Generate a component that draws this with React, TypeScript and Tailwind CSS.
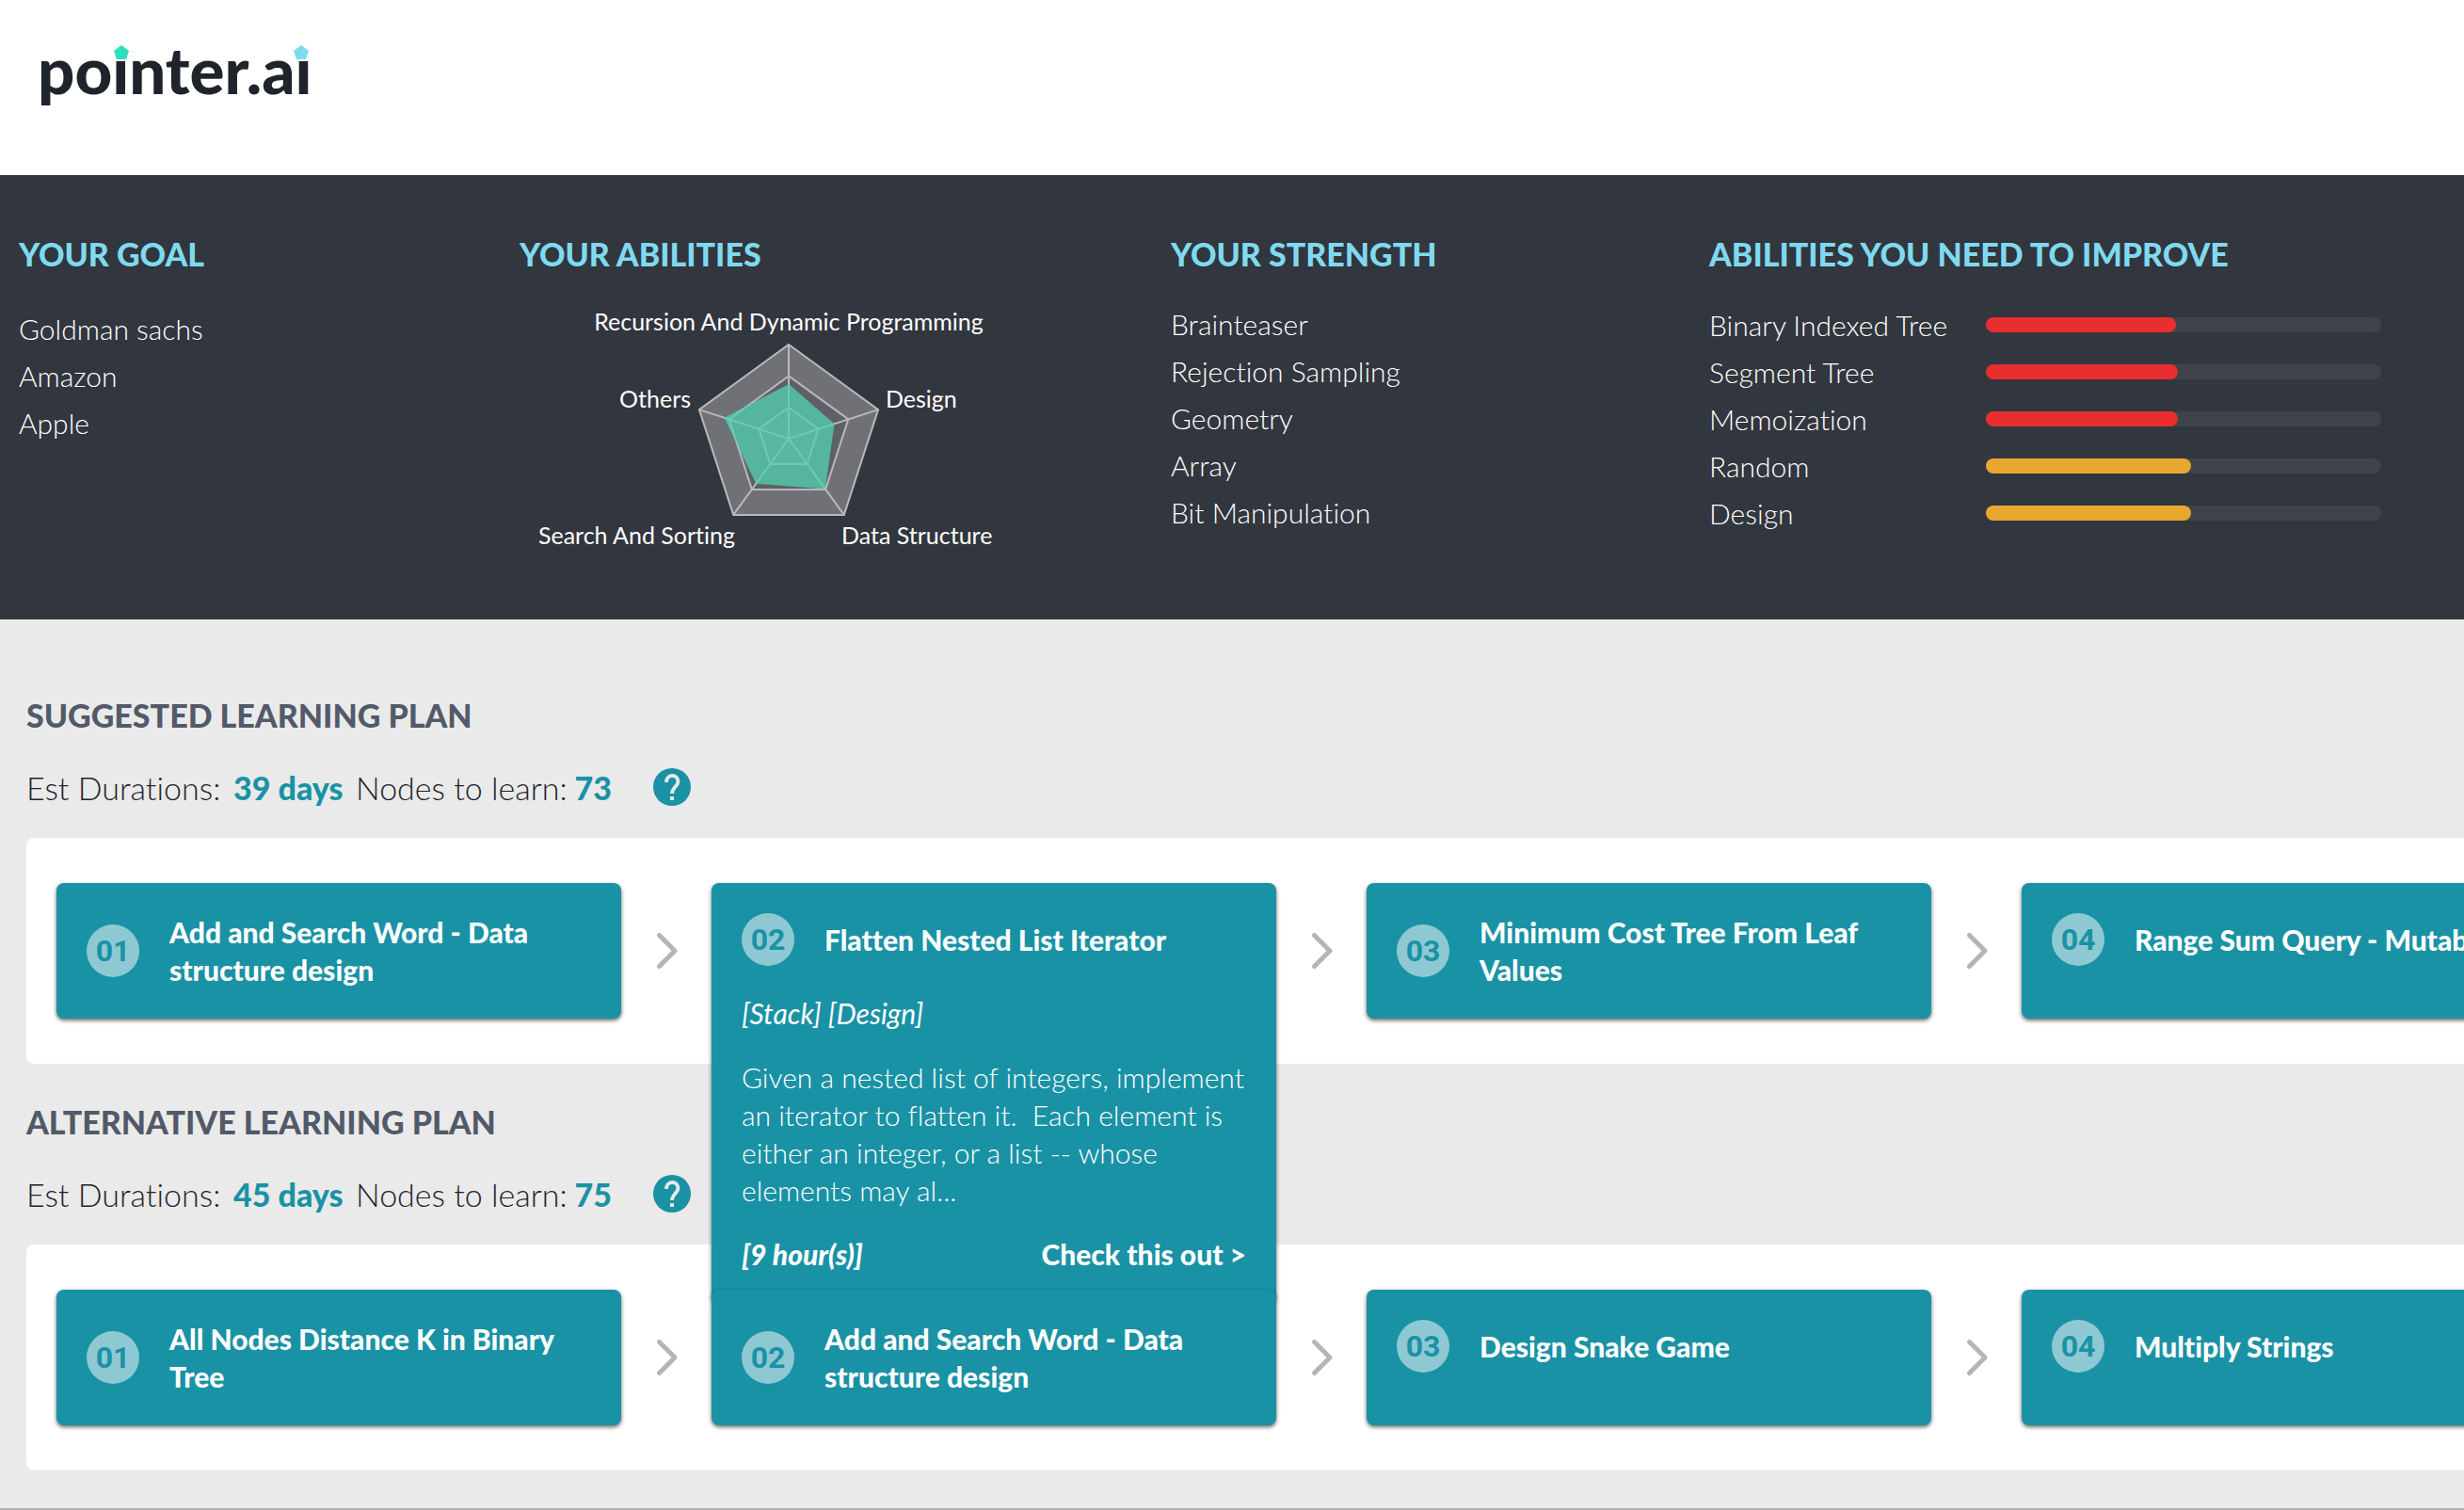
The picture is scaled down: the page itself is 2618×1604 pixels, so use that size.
import React from "react";

const goals = ["Goldman sachs", "Amazon", "Apple"];
const strengths = ["Brainteaser", "Rejection Sampling", "Geometry", "Array", "Bit Manipulation"];
const weak = [
  { name: "Binary Indexed Tree", value: 48, color: "bg-[#e92e2f]" },
  { name: "Segment Tree", value: 48.5, color: "bg-[#e92e2f]" },
  { name: "Memoization", value: 48.5, color: "bg-[#e92e2f]" },
  { name: "Random", value: 52, color: "bg-[#e8a830]" },
  { name: "Design", value: 52, color: "bg-[#e8a830]" },
];

type Node = {
  title: string;
  details?: { tags: string; text: string; hours: string };
};

const suggested: Node[] = [
  { title: "Add and Search Word - Data structure design" },
  {
    title: "Flatten Nested List Iterator",
    details: {
      tags: "[Stack] [Design]",
      text: "Given a nested list of integers, implement\nan iterator to flatten it.  Each element is\neither an integer, or a list -- whose\nelements may al...",
      hours: "[9 hour(s)]",
    },
  },
  { title: "Minimum Cost Tree From Leaf Values" },
  { title: "Range Sum Query - Mutable" },
];

const alternative: Node[] = [
  { title: "All Nodes Distance K in Binary Tree" },
  { title: "Add and Search Word - Data structure design" },
  { title: "Design Snake Game" },
  { title: "Multiply Strings" },
];

function Logo() {
  return (
    <svg width="320" height="120" viewBox="40 20 320 120" role="img" aria-label="pointer.ai">
      <text x="40" y="100" fontSize="69" className="fill-[#1f242c] font-['Lato',sans-serif] font-black">
        pointer.ai
      </text>
      <rect x="116" y="40" width="26" height="22" fill="#fff" />
      <rect x="304" y="40" width="34" height="22" fill="#fff" />
      <path d="M129 48l8 6-3 9h-10l-3-9z" fill="#2edfbf" />
      <path d="M320 48l8 6-3 9h-10l-3-9z" fill="#7fd9f0" />
    </svg>
  );
}

const point = (axis: number, r: number) => {
  const a = (axis * 2 * Math.PI) / 5 - Math.PI / 2;
  return `${(286 + r * Math.cos(a)).toFixed(1)},${(136 + r * Math.sin(a)).toFixed(1)}`;
};
const ring = (r: number) => [0, 1, 2, 3, 4].map((i) => point(i, r)).join(" ");
const scores = [58, 51, 66, 59, 72];

function Radar() {
  return (
    <svg
      width="540"
      height="272"
      viewBox="0 -8 540 272"
      className="fill-white font-['Lato',sans-serif] text-[25px]"
      role="img"
      aria-label="Abilities chart"
    >
      <g stroke="#b9b9bb" strokeWidth="2">
        <polygon points={ring(100)} fill="#707177" />
        <polygon points={ring(66.6)} fill="#5f6067" />
        <polygon points={ring(33.3)} fill="#6b6c72" />
        {[0, 1, 2, 3, 4].map((i) => (
          <polyline key={i} points={`286,136 ${point(i, 100)}`} />
        ))}
      </g>
      <polygon points={scores.map((s, i) => point(i, s)).join(" ")} fill="#52d1b2" fillOpacity="0.75" />
      <text x="286" y="21" textAnchor="middle">Recursion And Dynamic Programming</text>
      <text x="182" y="103" textAnchor="end">Others</text>
      <text x="389" y="103">Design</text>
      <text x="229" y="248" textAnchor="end">Search And Sorting</text>
      <text x="342" y="248">Data Structure</text>
    </svg>
  );
}

function Heading({ children }: { children: string }) {
  return <h2 className="text-[34px] leading-9 font-black text-[#7fdaf0]">{children}</h2>;
}

function Card({ node, index }: { node: Node; index: number }) {
  const d = node.details;
  return (
    <div className="relative h-36 w-[600px] shrink-0">
      <article className="absolute inset-x-0 top-0 min-h-36 rounded-lg bg-[#1a92a5] p-8 text-[30px] leading-10 text-white shadow-[0_2px_4px_rgba(0,0,0,0.6)]">
        <div className="flex items-center gap-8">
          <span className="flex size-14 shrink-0 items-center justify-center rounded-full bg-[#8ec9d3] font-['Roboto',sans-serif] text-[32px] font-bold text-[#1a92a5]">
            {"0" + index}
          </span>
          <h3 className="font-black">{node.title}</h3>
        </div>
        {d && (
          <>
            <p className="mt-[30px] italic">{d.tags}</p>
            <p className="mt-7 font-light whitespace-pre">{d.text}</p>
            <div className="mt-7 flex justify-between font-black">
              <span className="italic">{d.hours}</span>
              <a href="#details">Check this out &gt;</a>
            </div>
          </>
        )}
      </article>
    </div>
  );
}

function Plan({ title, days, count, nodes }: { title: string; days: string; count: string; nodes: Node[] }) {
  return (
    <section>
      <h2 className="text-[34px] leading-10 font-black text-[#525a69]">{title}</h2>
      <div className="mt-8 flex h-12 items-center text-[34px] text-[#1f242c]">
        <p className="flex w-[622px] font-light">
          <span className="w-[220px]">Est Durations:</span>
          <b className="w-[130px] font-black text-[#1a92a5]">{days}</b>
          <span className="flex-1">Nodes to learn:</span>
          <b className="font-black text-[#1a92a5]">{count}</b>
        </p>
        <button aria-label="Help" className="ml-10">
          <svg viewBox="0 0 24 24" className="size-12 fill-[#1a92a5]">
            <circle cx="12" cy="12" r="10" />
            <path d="M9 9.500C9 7.500 10.300 6 12.100 6c1.900 0 3.100 1.300 3.100 3.100 0 2.400-3.200 3.400-3.200 6.400" fill="none" stroke="#eaeaea" strokeWidth="1.900" />
            <rect x="11" y="17" width="2" height="2" fill="#eaeaea" />
          </svg>
        </button>
      </div>
      <div className="mt-[30px] flex items-center rounded-l-lg bg-white py-12 pl-8">
        {nodes.map((n, i) => (
          <React.Fragment key={n.title}>
            {i > 0 && (
              <svg viewBox="0 0 96 48" className="h-12 w-24 shrink-0" fill="none" stroke="#b5b5b5" strokeWidth="5" strokeLinecap="round">
                <path d="M40.500 7.500L57 24 40.500 40.500" strokeLinejoin="round" />
              </svg>
            )}
            <Card node={n} index={i + 1} />
          </React.Fragment>
        ))}
      </div>
    </section>
  );
}

export default function App() {
  return (
    <div className="min-h-screen overflow-hidden border-b-2 border-[#b0b0b0] bg-[#eaeaea] font-['Lato',sans-serif] [font-variant-ligatures:none]">
      <header className="h-[186px] bg-white px-10 pt-5">
        <Logo />
      </header>
      <section className="grid h-[472px] grid-cols-[532fr_692fr_572fr_802fr] bg-[#32363e] pt-[66px] pl-5 text-[30px] leading-[50px] font-light text-white">
        <div>
          <Heading>YOUR GOAL</Heading>
          <ul className="mt-9">
            {goals.map((g) => (
              <li key={g}>{g}</li>
            ))}
          </ul>
        </div>
        <div className="font-normal">
          <Heading>YOUR ABILITIES</Heading>
          <div className="mt-[34px]">
            <Radar />
          </div>
        </div>
        <div>
          <Heading>YOUR STRENGTH</Heading>
          <ul className="mt-[31px]">
            {strengths.map((s) => (
              <li key={s}>{s}</li>
            ))}
          </ul>
        </div>
        <div>
          <Heading>ABILITIES YOU NEED TO IMPROVE</Heading>
          <ul className="mt-8">
            {weak.map((w) => (
              <li key={w.name} className="flex h-[50px] items-center">
                <span className="w-[294px]">{w.name}</span>
                <div className="h-4 w-[420px] rounded-full bg-[#3f444b]">
                  <div className={"h-4 rounded-full " + w.color} style={{ width: w.value + "%" }} />
                </div>
              </li>
            ))}
          </ul>
        </div>
      </section>
      <main className="flex flex-col gap-[42px] pt-[82px] pb-10 pl-7">
        <Plan title="SUGGESTED LEARNING PLAN" days="39 days" count="73" nodes={suggested} />
        <Plan title="ALTERNATIVE LEARNING PLAN" days="45 days" count="75" nodes={alternative} />
      </main>
    </div>
  );
}
